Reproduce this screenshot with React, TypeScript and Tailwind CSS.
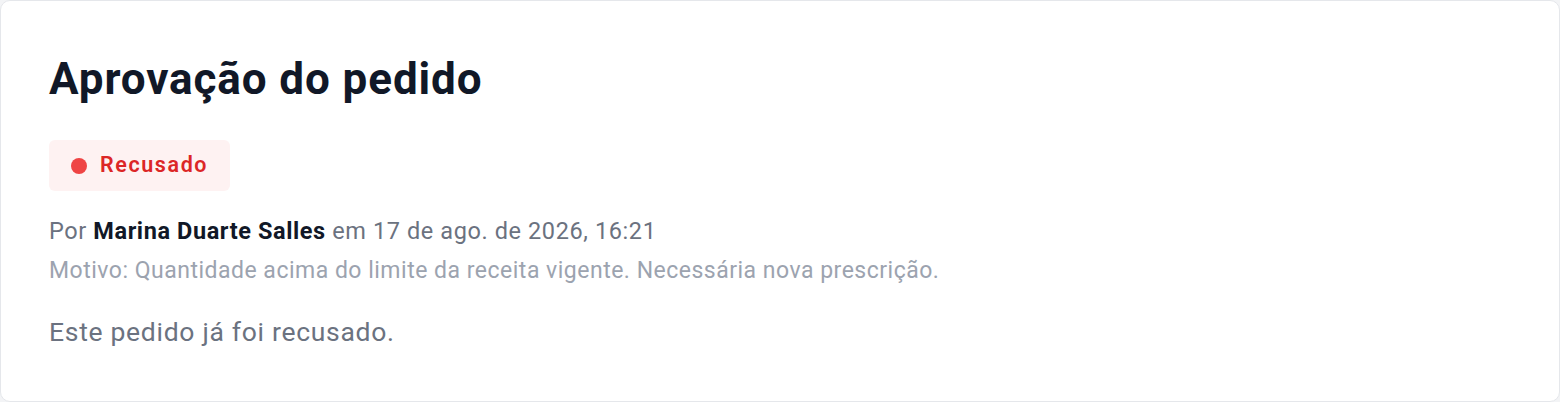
import React from "react";

export default function App() {
  return (
    <div className="w-[1560px] h-[402px] bg-[#f3f4f6]" style={{ fontFamily: 'Roboto, "Noto Sans", sans-serif' }}>
      <div className="h-full w-full rounded-[10px] border border-[#e5e7eb] bg-white px-12 pt-[54px]">
        <h1 className="text-[44px] font-bold leading-[48px] tracking-[0.9px] text-[#111827]">Aprovação do pedido</h1>
        <div className="mt-[37px] inline-flex h-[51px] items-center gap-[13px] rounded-md bg-[#fef2f2] px-[22px]">
          <span className="h-4 w-4 rounded-full bg-[#ef4444]" />
          <span className="text-[21.5px] font-semibold tracking-[1.6px] text-[#dc2626]">Recusado</span>
        </div>
        <p className="mt-[26px] text-[23.5px] leading-[28px] tracking-[0.6px] text-[#6b7280]">
          Por <span className="font-bold text-[#111827]">Marina Duarte Salles</span> em 17 de ago. de 2026, 16:21
        </p>
        <p className="mt-[12px] text-[23px] leading-[28px] tracking-[0.5px] text-[#9ca3af]">
          Motivo: Quantidade acima do limite da receita vigente. Necessária nova prescrição.
        </p>
        <p className="mt-[31px] text-[26.5px] leading-[32px] tracking-[0.7px] text-[#6b7280]">Este pedido já foi recusado.</p>
      </div>
    </div>
  );
}
